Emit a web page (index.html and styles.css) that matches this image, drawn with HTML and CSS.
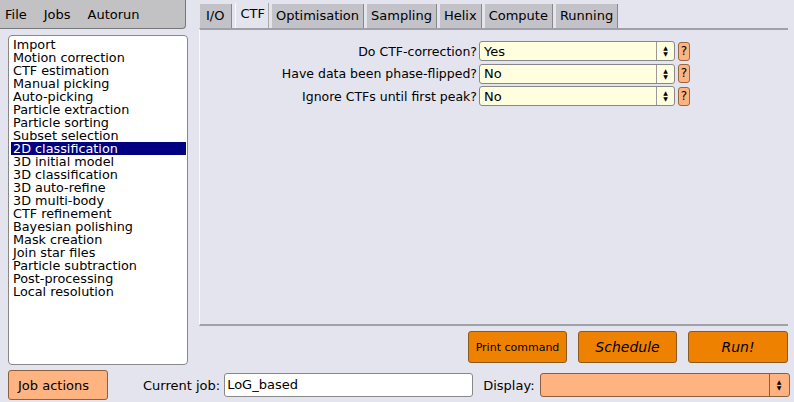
FILE: index.html
```html
<!DOCTYPE html>
<html lang="en">
<head>
  <meta charset="UTF-8" />
  <title>RELION</title>
  <link rel="stylesheet" href="styles.css">
</head>
<body>

<div id="main">
  <div id="leftSide">
    <div id="menuBar">
      <span>File</span>
      <span>Jobs</span>
      <span>Autorun</span>
    </div>
    <ul id="jobList">
      <li>Import</li>
      <li>Motion correction</li>
      <li>CTF estimation</li>
      <li>Manual picking</li>
      <li>Auto-picking</li>
      <li>Particle extraction</li>
      <li>Particle sorting</li>
      <li>Subset selection</li>
      <li class="selected">2D classification</li>
      <li>3D initial model</li>
      <li>3D classification</li>
      <li>3D auto-refine</li>
      <li>3D multi-body</li>
      <li>CTF refinement</li>
      <li>Bayesian polishing</li>
      <li>Mask creation</li>
      <li>Join star files</li>
      <li>Particle subtraction</li>
      <li>Post-processing</li>
      <li>Local resolution</li>
    </ul>
  </div>

  <div id="rightSide">
    <div id="tabs">
      <div class="tab first">I/O</div>
      <div class="tab active">CTF</div>
      <div class="tab">Optimisation</div>
      <div class="tab">Sampling</div>
      <div class="tab">Helix</div>
      <div class="tab">Compute</div>
      <div class="tab">Running</div>
    </div>
    <div id="panel">
      <div class="row">
        <label>Do CTF-correction?</label>
        <div class="choice"><span>Yes</span><b class="arrows">&#9650;<br>&#9660;</b></div>
        <div class="help">?</div>
      </div>
      <div class="row">
        <label>Have data been phase-flipped?</label>
        <div class="choice"><span>No</span><b class="arrows">&#9650;<br>&#9660;</b></div>
        <div class="help">?</div>
      </div>
      <div class="row">
        <label>Ignore CTFs until first peak?</label>
        <div class="choice"><span>No</span><b class="arrows">&#9650;<br>&#9660;</b></div>
        <div class="help">?</div>
      </div>
    </div>
    <div id="actionButtons">
      <button class="orange small">Print command</button>
      <button class="orange italic">Schedule</button>
      <button class="orange italic">Run!</button>
    </div>
  </div>
</div>

<div id="bottomBar">
  <button id="jobActions">Job actions</button>
  <label class="currentLabel">Current job:</label>
  <div id="currentJob">LoG_based</div>
  <label class="displayLabel">Display:</label>
  <div id="displayChoice"><b class="arrows">&#9650;<br>&#9660;</b></div>
</div>

</body>
</html>
```

FILE: styles.css
```css
body {
  background: #e4e4ee;
  color: black;
  margin: 0;
  padding: 0;
  font-family: "DejaVu Sans", sans-serif;
  width: 794px;
  height: 402px;
  overflow: hidden;
}

#main {
  display: flex;
  height: 366px;
}

#leftSide {
  width: 188px;
  display: flex;
  flex-direction: column;
}

#menuBar {
  height: 29px;
  width: 186px;
  box-sizing: border-box;
  background: #c2c2c4;
  border: 1px solid #777;
  border-top: none;
  border-left: none;
  border-radius: 0 0 4px 0;
  display: flex;
  align-items: center;
  gap: 17px;
  padding-left: 5px;
  padding-top: 1px;
  font-size: 13px;
  white-space: nowrap;
}

#jobList {
  list-style: none;
  margin: 6px 0 0 8px;
  padding: 2px 0 0 2px;
  width: 180px;
  height: 330px;
  box-sizing: border-box;
  background: white;
  border: 1px solid #888;
  border-radius: 4px;
  font-size: 12.8px;
  line-height: 13px;
}

#jobList li {
  padding-left: 2px;
  height: 13px;
  margin-right: 1px;
  white-space: nowrap;
}

#jobList li.selected {
  background: #000080;
  color: white;
}

#rightSide {
  margin-left: 11px;
  width: 589px;
  display: flex;
  flex-direction: column;
}

#tabs {
  display: flex;
  gap: 3px;
  padding-top: 4px;
  height: 28px;
  box-sizing: border-box;
  padding-left: 1px;
  font-size: 13px;
  white-space: nowrap;
}

.tab {
  background: #c2c2c8;
  padding: 0 4px;
  height: 24px;
  line-height: 24px;
  border-right: 1px solid #888;
}

.tab.first {
  padding: 0 7px 0 6px;
}

.tab.active {
  background: #e4e4ee;
  margin-top: -1px;
  height: 25px;
  line-height: 22px;
  border-left: 1px solid #fafafa;
  border-right: 1px solid #aaa;
  padding: 0 3px 0 4px;
}

#panel {
  height: 298px;
  box-sizing: border-box;
  border-top: 2px solid #a0a0a8;
  border-bottom: 2px solid #a0a0a8;
  border-left: 1px solid #fafafa;
  padding-top: 11px;
  font-size: 12.5px;
}

.row {
  display: flex;
  align-items: center;
  height: 20px;
  margin-bottom: 2.5px;
}

.row label {
  width: 277px;
  text-align: right;
  padding-right: 2px;
  white-space: nowrap;
}

.choice {
  width: 196px;
  height: 20px;
  box-sizing: border-box;
  background: #ffffe0;
  border: 1px solid #888;
  border-radius: 3px;
  display: flex;
  align-items: center;
  padding-left: 4px;
  font-size: 13px;
}

.choice span {
  flex-grow: 1;
}

.arrows {
  width: 18px;
  height: 18px;
  border-left: 1px solid #999;
  font-size: 6px;
  line-height: 6px;
  text-align: center;
  padding-top: 3px;
  box-sizing: border-box;
  font-weight: normal;
}

.help {
  width: 12px;
  height: 19px;
  box-sizing: border-box;
  margin-left: 3px;
  background: #ffb380;
  border: 1px solid #996644;
  border-radius: 3px;
  font-size: 12px;
  line-height: 17px;
  text-align: center;
}

#actionButtons {
  display: flex;
  justify-content: flex-end;
  gap: 11px;
  margin-top: 5px;
}

button {
  font-family: "DejaVu Sans", sans-serif;
  cursor: pointer;
  margin: 0;
  padding: 0;
  color: black;
  white-space: nowrap;
}

button.orange {
  width: 99px;
  height: 32px;
  background: #ee8200;
  border: 1px solid #8a5a20;
  border-radius: 3px;
}

button.small {
  font-size: 11px;
}

button.italic {
  font-size: 14px;
  font-style: italic;
}

button.italic:last-child {
  width: 100px;
}

#bottomBar {
  display: flex;
  align-items: center;
  height: 30px;
  margin-top: 4px;
  padding-left: 8px;
  font-size: 13px;
  white-space: nowrap;
}

#jobActions {
  width: 100px;
  height: 30px;
  background: #ffb380;
  border: 1px solid #8a6040;
  border-radius: 3px;
  font-size: 13px;
  text-align: left;
  padding-left: 9px;
}

.currentLabel {
  margin-left: 35px;
  margin-right: 4px;
}

#currentJob {
  width: 249px;
  height: 24px;
  box-sizing: border-box;
  background: white;
  border: 1px solid #888;
  border-radius: 3px;
  padding-left: 2px;
  line-height: 22px;
}

.displayLabel {
  margin-left: 10px;
  margin-right: 5px;
}

#displayChoice {
  width: 250px;
  height: 24px;
  box-sizing: border-box;
  background: #ffb380;
  border: 1px solid #8a6040;
  border-radius: 3px;
  display: flex;
  justify-content: flex-end;
  align-items: center;
}

#displayChoice .arrows {
  width: 20px;
  height: 22px;
  padding-top: 5px;
  border-left: 1px solid #8a6040;
}
```
